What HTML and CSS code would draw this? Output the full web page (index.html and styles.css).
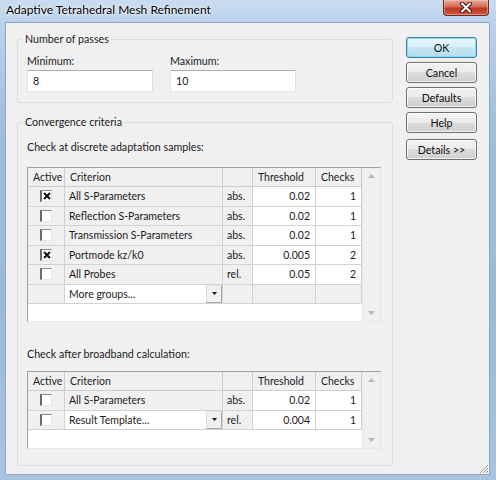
FILE: index.html
```html
<!DOCTYPE html>
<html>
<head>
<meta charset="utf-8">
<link rel="stylesheet" href="styles.css">
</head>
<body>
<div class="window">
  <div class="titlebar">
    <span class="title">Adaptive Tetrahedral Mesh Refinement</span>
    <div class="close">
      <svg width="14" height="11" viewBox="0 0 14 11"><path d="M3 1.5 L11 9.5 M11 1.5 L3 9.5" stroke="#4a1712" stroke-width="4" stroke-linecap="round"/><path d="M3 1.5 L11 9.5 M11 1.5 L3 9.5" stroke="#fff" stroke-width="2" stroke-linecap="round"/></svg>
    </div>
  </div>
  <div class="client">
    <div class="main">
      <fieldset class="group g1">
        <legend>Number of passes</legend>
        <div class="passes">
          <div class="field"><span>Minimum:</span><div class="input">8</div></div>
          <div class="field"><span>Maximum:</span><div class="input">10</div></div>
        </div>
      </fieldset>
      <fieldset class="group g2">
        <legend>Convergence criteria</legend>
        <div class="caption">Check at discrete adaptation samples:</div>
        <div class="table t1">
          <div class="grid">
            <div class="c h">Active</div><div class="c h">Criterion</div><div class="c h"></div><div class="c h">Threshold</div><div class="c h">Checks</div>

            <div class="c act"><span class="cb"><svg width="8" height="8" viewBox="0 0 8 8"><path d="M1 1 L7 7 M7 1 L1 7" stroke="#111" stroke-width="2"/></svg></span></div><div class="c">All S-Parameters</div><div class="c">abs.</div><div class="c w num">0.02</div><div class="c w num">1</div>

            <div class="c act"><span class="cb"></span></div><div class="c">Reflection S-Parameters</div><div class="c">abs.</div><div class="c w num">0.02</div><div class="c w num">1</div>

            <div class="c act"><span class="cb"></span></div><div class="c">Transmission S-Parameters</div><div class="c">abs.</div><div class="c w num">0.02</div><div class="c w num">1</div>

            <div class="c act"><span class="cb"><svg width="8" height="8" viewBox="0 0 8 8"><path d="M1 1 L7 7 M7 1 L1 7" stroke="#111" stroke-width="2"/></svg></span></div><div class="c">Portmode kz/k0</div><div class="c">abs.</div><div class="c w num">0.005</div><div class="c w num">2</div>

            <div class="c act"><span class="cb"></span></div><div class="c">All Probes</div><div class="c">rel.</div><div class="c w num">0.05</div><div class="c w num">2</div>

            <div class="c"></div><div class="c w combo"><span>More groups...</span><span class="drop"><svg width="5" height="3" viewBox="0 0 5 3"><path d="M0 0 H5 L2.5 3 Z" fill="#111"/></svg></span></div><div class="c"></div><div class="c"></div><div class="c"></div>
          </div>
          <div class="scroll">
            <svg width="7" height="4" viewBox="0 0 7 4"><path d="M0 4 L3.5 0 L7 4 Z" fill="#b8b8b8"/></svg>
            <svg width="7" height="4" viewBox="0 0 7 4"><path d="M0 0 L3.5 4 L7 0 Z" fill="#b8b8b8"/></svg>
          </div>
        </div>
        <div class="caption caption2">Check after broadband calculation:</div>
        <div class="table t2">
          <div class="grid">
            <div class="c h">Active</div><div class="c h">Criterion</div><div class="c h"></div><div class="c h">Threshold</div><div class="c h">Checks</div>

            <div class="c act"><span class="cb"></span></div><div class="c">All S-Parameters</div><div class="c">abs.</div><div class="c w num">0.02</div><div class="c w num">1</div>

            <div class="c act"><span class="cb"></span></div><div class="c w combo"><span>Result Template...</span><span class="drop"><svg width="5" height="3" viewBox="0 0 5 3"><path d="M0 0 H5 L2.5 3 Z" fill="#111"/></svg></span></div><div class="c">rel.</div><div class="c w num">0.004</div><div class="c w num">1</div>
          </div>
          <div class="scroll">
            <svg width="7" height="4" viewBox="0 0 7 4"><path d="M0 4 L3.5 0 L7 4 Z" fill="#b8b8b8"/></svg>
            <svg width="7" height="4" viewBox="0 0 7 4"><path d="M0 0 L3.5 4 L7 0 Z" fill="#b8b8b8"/></svg>
          </div>
        </div>
      </fieldset>
    </div>
    <div class="buttons">
      <div class="btn def">OK</div>
      <div class="btn">Cancel</div>
      <div class="btn">Defaults</div>
      <div class="btn">Help</div>
      <div class="btn details">Details &gt;&gt;</div>
    </div>
  </div>
  <svg class="grip" width="11" height="11" viewBox="0 0 11 11"><path d="M10 2 L2 10 M10 5 L5 10 M10 8 L8 10" stroke="#9a9a9a" stroke-width="1"/><path d="M11 3 L3 11 M11 6 L6 11 M11 9 L9 11" stroke="#fff" stroke-width="1"/></svg>
</div>
</body>
</html>
```
FILE: styles.css
```css
* { box-sizing: border-box; }
body { margin: 0; font-family: Lato, "Open Sans", "Liberation Sans", sans-serif; font-size: 10.7px; color: #1b1b1b; }

.window {
  width: 496px; height: 480px; position: relative; overflow: hidden;
  display: flex; flex-direction: column;
  background: linear-gradient(180deg, #c9dcf1 0, #bcd2eb 22px, #a2bedd 120px, #9cb9da 300px, #a9c3e0 480px);
}
.titlebar { height: 22px; flex: none; display: flex; justify-content: space-between; align-items: flex-start; padding-left: 6px; }
.title { font-size: 12px; line-height: 20px; color: #000; text-shadow: 0 0 5px rgba(255,255,255,0.95), 0 0 2px rgba(255,255,255,0.9); }
.close {
  width: 46px; height: 16px; margin-right: 7px;
  border: 1px solid #6e2a22; border-top: none; border-radius: 0 0 4px 4px;
  background: linear-gradient(#e8ab9c, #d56a55 45%, #bb3520 55%, #cd5a44);
  box-shadow: inset 0 0 0 1px rgba(255,210,200,0.45);
  display: flex; align-items: center; justify-content: center;
}

.client {
  flex: 1; margin: 0 6px 5px 5px; background: #f0f0f0;
  border: 1px solid #8ca7c6;
  display: flex; gap: 13px; padding: 9px 0 0 11px;
}
.main { width: 376px; flex: none; }

.group { margin: 0; border: 1px solid #d5dfe5; border-radius: 3px; padding: 0 9px 10px; min-width: 0; }
.group legend { padding: 0 2px; margin-left: -4px; line-height: 14px; color: #1b1b1b; }

.passes { display: flex; gap: 17px; margin-top: 8px; }
.field { display: flex; flex-direction: column; gap: 2px; width: 126px; }
.field span { line-height: 14px; }
.input {
  height: 22px; background: #fff; padding-left: 5px; line-height: 20px;
  border: 1px solid; border-color: #abadb3 #dbdfe6 #e3e9ef #e2e3ea;
}

.g2 { margin-top: 12px; padding-bottom: 16px; }
.caption { margin-top: 11px; line-height: 14px; }
.caption2 { margin-top: 25px; }

.table {
  margin-top: 13px; width: 354px; display: flex; background: #fff;
  border: 1px solid; border-color: #a0a0a0 #e2e2e2 #e8e8e8 #a0a0a0;
}
.t1 { height: 155px; }
.t2 { margin-top: 10px; height: 78px; }

.grid {
  width: 334px; flex: none; display: grid; align-content: start;
  grid-template-columns: 37px 158px 30px 63px 46px;
  grid-template-rows: 19px; grid-auto-rows: 19.5px;
}
.c {
  background: #f0f0f0; border-right: 1px solid #d2d2d2; border-bottom: 1px solid #d2d2d2;
  display: flex; align-items: center; padding: 0 4px; white-space: nowrap; overflow: hidden;
  font-size: 10.5px;
}
.c.h { padding-left: 5px; border-color: #cdcdcd; }
.c.w { background: #fff; }
.c.num { justify-content: flex-end; padding-right: 5px; }
.c.act { justify-content: center; padding: 0; }
.c.combo { justify-content: space-between; padding-right: 0; align-items: stretch; }
.c.combo span:first-child { display: flex; align-items: center; }
.drop {
  width: 16px; display: flex; align-items: center; justify-content: center;
  background: #f0f0f0; border: 1px solid; border-color: #e4e4e4 #a8a8a8 #a8a8a8 #dcdcdc;
}

.cb {
  width: 12px; height: 12px; background: #fff;
  border-left: 2px solid #6a6a6a; border-top: 1px solid #8c8c8c;
  border-right: 1px solid #e6e6e6; border-bottom: 1px solid #e6e6e6;
  display: flex; align-items: center; justify-content: center;
}

.scroll {
  width: 18px; background: #f0f0f0; border-left: 1px solid #e8e8e8;
  display: flex; flex-direction: column; justify-content: space-between; align-items: center;
  padding: 6px 0 6px;
}

.buttons { width: 71px; flex: none; display: flex; flex-direction: column; gap: 4px; margin-top: 5px; }
.btn {
  height: 21px; display: flex; align-items: center; justify-content: center; color: #111;
  border: 1px solid #707070; border-radius: 3px;
  background: linear-gradient(#f2f2f2 0, #ebebeb 50%, #dddddd 50%, #cfcfcf 100%);
  box-shadow: inset 0 0 0 1px rgba(255,255,255,0.75);
}
.btn.def {
  border-color: #3c7fb1;
  background: linear-gradient(#e8f5fb 0, #d9eff8 50%, #c6e6f3 50%, #b6dcee 100%);
  box-shadow: inset 0 0 0 1px #8fdaf5;
}
.btn.details { margin-top: 2px; }

.grip { position: absolute; right: 7px; bottom: 6px; }
```
